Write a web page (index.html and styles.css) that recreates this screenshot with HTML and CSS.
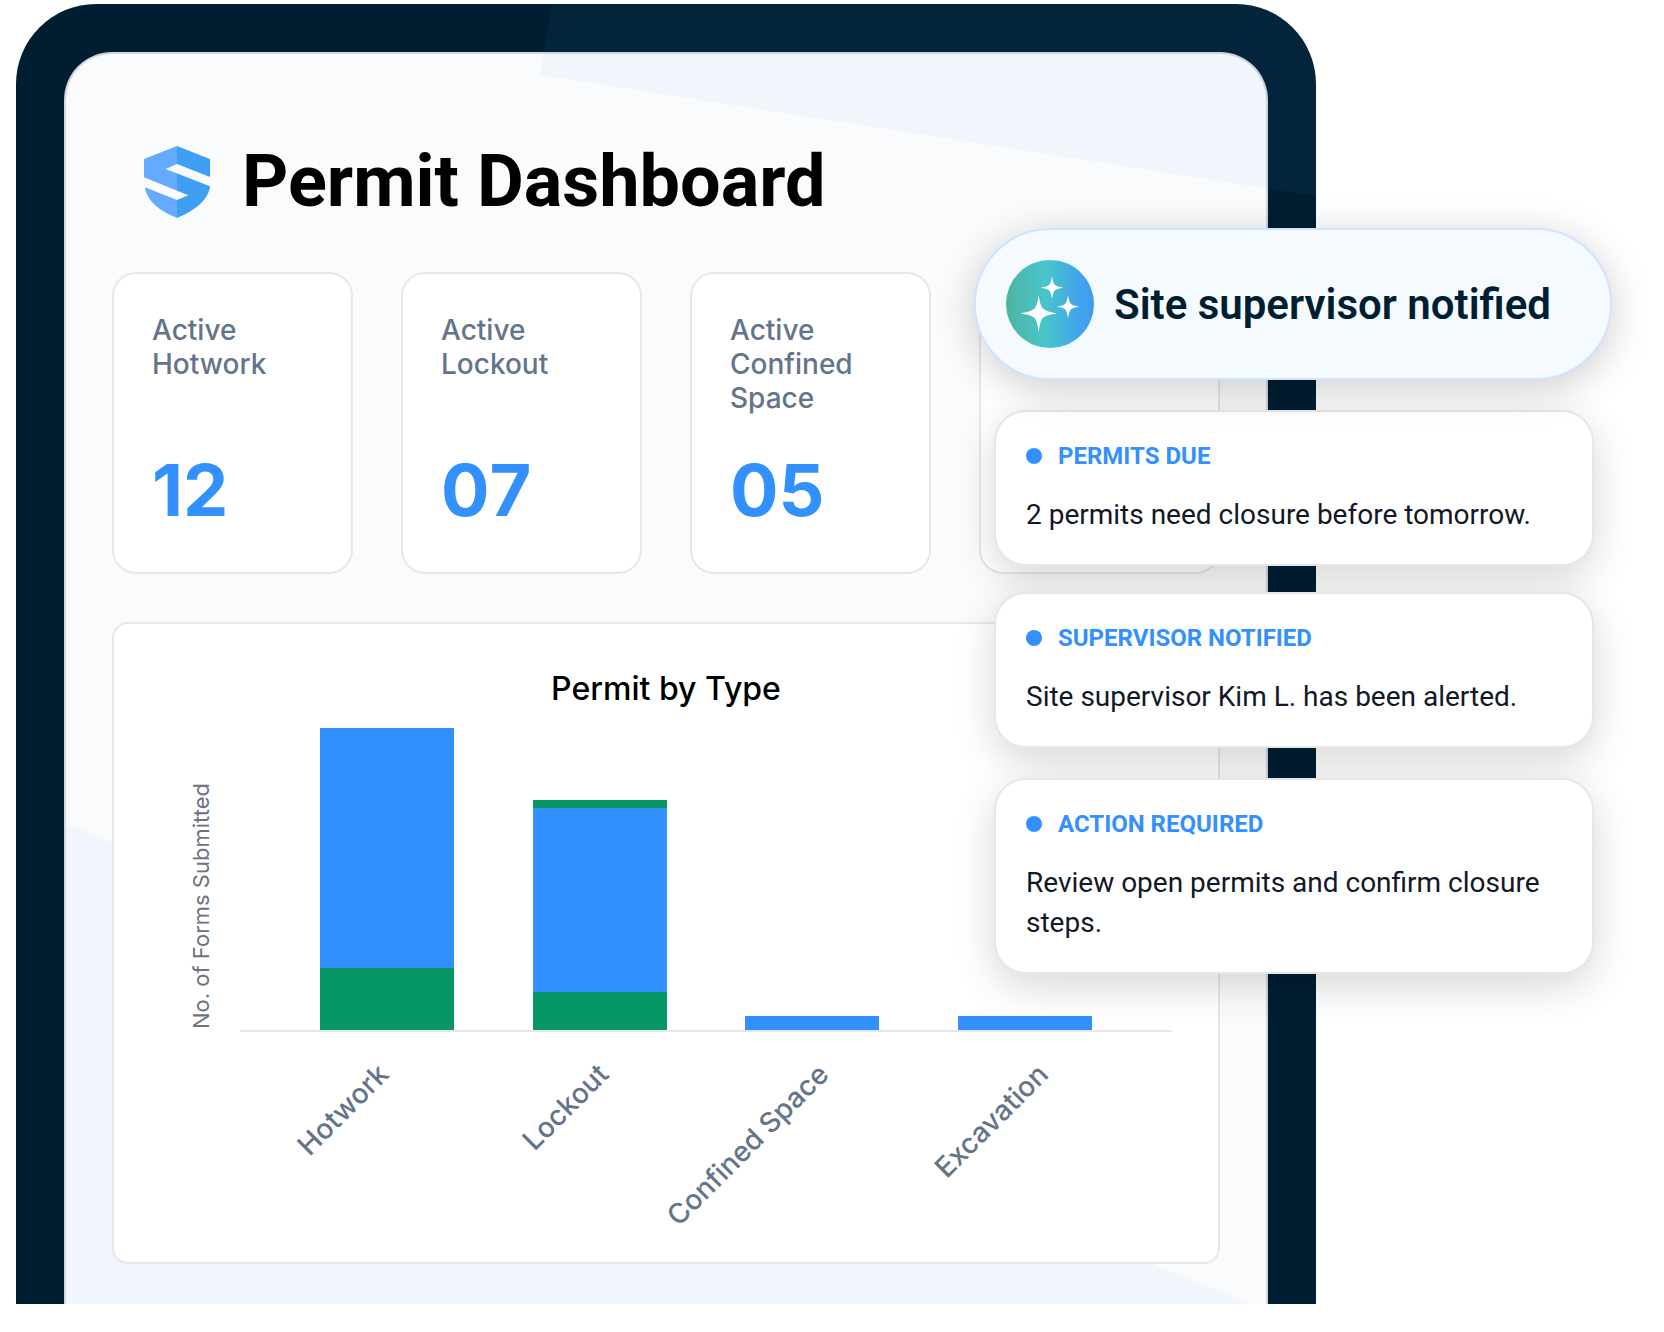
FILE: index.html
```html
<!DOCTYPE html>
<html lang="en">
<head>
  <meta charset="utf-8">
  <meta name="viewport" content="width=device-width, initial-scale=1">
  <title>Permit Dashboard</title>
  <link rel="stylesheet" href="styles.css">
</head>
<body>
  <main class="scene">
    <section class="device">
      <div class="screen">
        <header class="header">
          <svg class="logo" viewBox="0 0 198 216" aria-hidden="true">
            <defs>
              <linearGradient id="shield">
                <stop offset="0.5" stop-color="#64abff"/>
                <stop offset="0.5" stop-color="#3f9ff2"/>
              </linearGradient>
            </defs>
            <path fill="url(#shield)" d="M99 0 198 39V93L99 54 65 69 198 121C194 162 150 196 99 216 48 196 8 165 3 124L99 162 133 148 0 94V39Z"/>
          </svg>
          <h1 class="title">Permit Dashboard</h1>
        </header>

        <div class="stats">
          <article class="stat">
            <h2 class="stat-label">Active Hotwork</h2>
            <p class="stat-value">12</p>
          </article>
          <article class="stat">
            <h2 class="stat-label">Active Lockout</h2>
            <p class="stat-value">07</p>
          </article>
          <article class="stat">
            <h2 class="stat-label">Active Confined Space</h2>
            <p class="stat-value">05</p>
          </article>
          <article class="stat"></article>
        </div>

        <section class="chart">
          <h2 class="chart-title">Permit by Type</h2>
          <div class="chart-body">
            <span class="y-label">No. of Forms Submitted</span>
            <div class="plot">
              <div class="bar">
                <span class="blue" style="height:240px"></span>
                <span class="green" style="height:62px"></span>
              </div>
              <div class="bar">
                <span class="green" style="height:8px"></span>
                <span class="blue" style="height:184px"></span>
                <span class="green" style="height:38px"></span>
              </div>
              <div class="bar"><span class="blue" style="height:14px"></span></div>
              <div class="bar"><span class="blue" style="height:14px"></span></div>
            </div>
          </div>
          <div class="x-labels">
            <span>Hotwork</span>
            <span>Lockout</span>
            <span>Confined Space</span>
            <span>Excavation</span>
          </div>
        </section>
      </div>
    </section>

    <aside class="alerts">
      <div class="pill">
        <svg class="spark" viewBox="0 0 264 264" aria-hidden="true">
          <defs>
            <linearGradient id="spark-fill">
              <stop offset="0" stop-color="#4db49f"/>
              <stop offset="0.45" stop-color="#49c5cb"/>
              <stop offset="0.85" stop-color="#41a2ee"/>
              <stop offset="1" stop-color="#3f9cf2"/>
            </linearGradient>
          </defs>
          <circle cx="132" cy="132" r="132" fill="url(#spark-fill)"/>
          <g fill="#fff">
            <path d="M98 106Q103 143 113 147 121 155 154 160 121 165 113 172 103 177 98 216 93 177 83 172 75 165 42 160 75 155 83 147 93 143 98 106Z"/>
            <path d="M138 49Q142 73 148 76 153 80 172 83 153 86 148 90 142 93 138 117 134 93 128 90 123 86 104 83 123 80 128 76 134 73 138 49Z"/>
            <path d="M186 106Q190 130 196 133 201 137 220 140 201 143 196 147 190 150 186 174 182 150 176 147 171 143 152 140 171 137 176 133 182 130 186 106Z"/>
          </g>
        </svg>
        <strong class="pill-text">Site supervisor notified</strong>
      </div>

      <article class="alert">
        <h3 class="alert-title">PERMITS DUE</h3>
        <p class="alert-text">2 permits need closure before tomorrow.</p>
      </article>
      <article class="alert">
        <h3 class="alert-title">SUPERVISOR NOTIFIED</h3>
        <p class="alert-text">Site supervisor Kim L. has been alerted.</p>
      </article>
      <article class="alert alert-action">
        <h3 class="alert-title">ACTION REQUIRED</h3>
        <p class="alert-text">Review open permits and confirm closure steps.</p>
      </article>
    </aside>
  </main>
</body>
</html>
```
FILE: styles.css
```css
* {
  box-sizing: border-box;
}

body {
  margin: 0;
  background: #fff;
  font-family: Inter, sans-serif;
}

h1, h2, h3, p {
  margin: 0;
}

.scene {
  position: relative;
  padding: 4px 348px 28px 16px;
}

/* Device frame */
.device {
  overflow: hidden;
  padding: 48px 48px 0;
  border-radius: 80px 80px 0 0;
  background: #001e32;
}

.screen {
  position: relative;
  isolation: isolate;
  display: flex;
  flex-direction: column;
  gap: 48px;
  padding: 86px 46px 40px;
  border: 2px solid #d3d7dd;
  border-bottom: 0;
  border-radius: 48px 48px 0 0;
  background: #fafbfd;
}

/* Tinted background facets */
.screen::before,
.screen::after {
  content: "";
  position: absolute;
  z-index: -1;
  background: rgba(70, 150, 230, 0.05);
}

.screen::before {
  inset: -50px -50px auto;
  height: 192px;
  clip-path: polygon(41.2% 0, 40.3% 37%, 100% 100%, 100% 0);
}

.screen::after {
  inset: auto 0 0;
  height: 480px;
  clip-path: polygon(0 0, 98.8% 100%, 0 100%);
}

.header {
  display: flex;
  align-items: center;
  gap: 32px;
  padding-left: 32px;
}

.logo {
  width: 66px;
  height: 72px;
}

.title {
  font: 700 72px/84px Roboto, sans-serif;
  color: #000;
}

/* Stat cards */
.stats {
  display: grid;
  grid-template-columns: repeat(4, 1fr);
  gap: 48px;
}

.stat {
  display: flex;
  flex-direction: column;
  gap: 31px;
  padding: 39px 38px 38px;
  border: 2px solid #e5e7eb;
  border-radius: 24px;
  background: #fff;
}

.stat-label {
  min-height: 102px;
  font-size: 28px;
  font-weight: 500;
  line-height: 34px;
  color: #64748b;
}

.stat-value {
  font-size: 72px;
  font-weight: 700;
  font-kerning: none;
  line-height: 88px;
  color: #3390ff;
}

/* Chart */
.chart {
  padding: 45px 46px 180px 74px;
  border: 2px solid #e5e7eb;
  border-radius: 16px;
  background: #fff;
}

.chart-title {
  margin-left: -28px;
  font-size: 32px;
  font-weight: 500;
  line-height: 40px;
  text-align: center;
  color: #000;
}

.chart-body {
  display: flex;
  align-items: flex-end;
  gap: 26px;
  margin-top: 19px;
}

.y-label {
  padding-top: 3px;
  font-size: 22px;
  line-height: 26px;
  white-space: nowrap;
  color: #6b7280;
  writing-mode: vertical-rl;
  transform: rotate(180deg);
}

.plot {
  flex: 1;
  display: flex;
  align-items: flex-end;
  justify-content: space-between;
  padding: 0 80px;
  border-bottom: 2px solid #e5e7eb;
}

.bar {
  display: flex;
  flex-direction: column;
  width: 134px;
}

.blue {
  background: #3390ff;
}

.green {
  background: #069668;
}

.x-labels {
  display: grid;
  grid-template-columns: repeat(4, 1fr);
  margin: 15px 117px 0 -13px;
  padding-bottom: 1px;
}

.x-labels span {
  justify-self: end;
  font-size: 28px;
  font-weight: 500;
  line-height: 34px;
  white-space: nowrap;
  color: #64748b;
  transform: rotate(-45deg);
  transform-origin: 100% 100%;
}

/* Floating notifications */
.alerts {
  position: absolute;
  top: 228px;
  right: 52px;
  width: 638px;
  font-family: Roboto, sans-serif;
}

.pill {
  position: relative;
  z-index: 1;
  display: flex;
  align-items: center;
  gap: 20px;
  margin-bottom: 30px;
  padding: 30px;
  border: 2px solid #cfe5ff;
  border-radius: 76px;
  background: #f5faff;
  box-shadow: 0 8px 40px rgba(0, 0, 0, 0.2);
}

.spark {
  width: 88px;
  height: 88px;
}

.pill-text {
  padding-top: 2px;
  font-size: 42px;
  font-weight: 600;
  line-height: 48px;
  white-space: nowrap;
  color: #001e32;
}

.alert {
  margin: 0 18px 26px 20px;
  padding: 30px;
  border: 2px solid #e5e7eb;
  border-radius: 32px;
  background: #fff;
  box-shadow: 0 12px 40px rgba(0, 0, 0, 0.16);
}

.alert-action {
  margin-top: 30px;
}

.alert-title {
  display: flex;
  align-items: center;
  gap: 16px;
  margin-bottom: 25px;
  font-size: 24px;
  font-weight: 700;
  line-height: 28px;
  color: #3390ff;
}

.alert-title::before {
  content: "";
  width: 16px;
  height: 16px;
  border-radius: 50%;
  background: #3390ff;
}

.alert-text {
  margin-bottom: -1px;
  font-size: 28px;
  line-height: 40px;
  color: #111827;
}
```
